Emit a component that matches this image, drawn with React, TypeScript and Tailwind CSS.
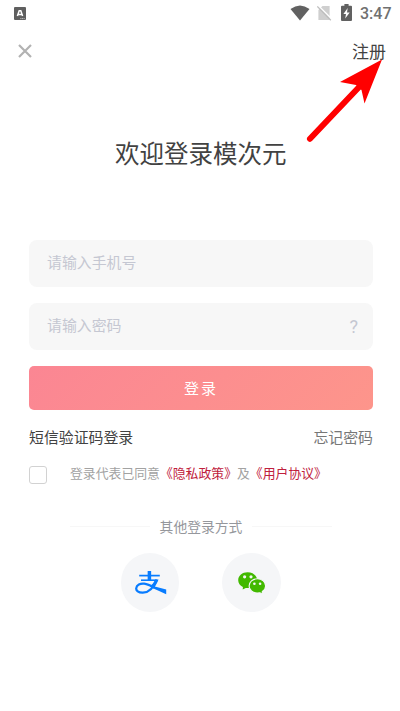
import React from "react";

function StatusBar() {
  return (
    <div className="flex h-[27px] items-center pl-[14px] pr-[9px]">
      <svg width="12" height="13" viewBox="0 0 12 13">
        <rect width="12" height="13" rx="1" fill="#5f5f5f" />
        <path d="M3.4 9 5.2 3.8h1.6L8.6 9M4.2 7.4h3.6" fill="none" stroke="#fff" strokeWidth="1.5" />
        <path d="M6.3 11.6h4.4" stroke="#d5d5d5" strokeWidth="0.8" strokeDasharray="1.2 0.5" />
      </svg>
      <svg className="-mt-[1px] ml-auto" width="20" height="16" viewBox="0 0 20 16">
        <path d="M0.5 4.1Q10 -3.2 19.5 4.1L10 15.6Z" fill="#616161" />
      </svg>
      <svg className="-mt-[1px] ml-[7px]" width="15" height="16" viewBox="0 0 15 16">
        <path d="M5.5 1H12.6V15H1.4V5Z" fill="#cfcfcf" />
        <path d="M1.2 0.6 15 14.3" stroke="#fff" strokeWidth="1.4" />
        <path d="M0.3 1.5 13.8 15.2" stroke="#bdbdbd" strokeWidth="1.3" />
      </svg>
      <svg className="-mt-[2px] ml-[9px]" width="11" height="17" viewBox="0 0 11 17">
        <path d="M1 1.8H3.4V0H7.6V1.8H10Q11 1.8 11 2.8V16Q11 17 10 17H1Q0 17 0 16V2.8Q0 1.8 1 1.8Z" fill="#616161" />
        <path d="M6.7 4 2.4 10H5L4.2 14.6 8.7 8.4H6Z" fill="#fff" />
      </svg>
      <span className="ml-[8px] w-[31px] whitespace-nowrap font-[Roboto] text-[16px] font-medium leading-[28px] text-[#707070]">
        3:47
      </span>
    </div>
  );
}

function Field({ placeholder, children }: { placeholder: string; children?: React.ReactNode }) {
  return (
    <div className="flex h-[47px] items-start justify-between rounded-[8px] bg-[#f7f7f7] pl-[18px] pr-[15px] text-[14.9px] leading-[44px] text-[#c5c7d2]">
      <span>{placeholder}</span>
      {children}
    </div>
  );
}

function AlipayLogo() {
  return (
    <svg className="ml-px" width="32" height="25" viewBox="0 0 32 25">
      <g fill="none" stroke="#087cff">
        <path d="M4.2 5.6H24.8" strokeWidth="1.7" />
        <path d="M14.4 1V10" strokeWidth="3.5" />
        <path d="M6 10.2H21.5" strokeWidth="1.6" />
        <path d="M21.8 9.6C19.5 15.5 15.2 22.6 7.8 22.7C3.2 22.8 1 20.5 1.2 18.3C1.5 14.8 5.3 13.3 9.2 13.7C12.6 14.1 15.8 15.7 19.5 17.7" strokeWidth="2.2" />
      </g>
      <path d="M20.1 9.5H23.5C22.4 12.5 21.1 15 19.8 16.6L31.2 19.4V24.2L14.7 16.7C17.2 14.7 19 12.3 20.1 9.5Z" fill="#087cff" />
    </svg>
  );
}

function WechatLogo() {
  return (
    <svg width="28" height="22" viewBox="0 0 28 22">
      <path d="M9.6 0.2C15 .2 19.2 3.7 19.2 8.2S15 16.1 9.6 16.1L7.8 15.9 4.7 17.5 4.9 14.9C2 13.5.2 11 .2 8.2.2 3.7 4.3.2 9.6.2Z" fill="#42b900" />
      <path d="M19.3 6.8C24 6.8 27.6 10 27.6 14 27.6 16.3 26.3 18.3 24.3 19.5L24.5 21.7 21.8 20.7 19.3 21C14.7 21 11.1 17.9 11.1 14S14.7 6.8 19.3 6.8Z" fill="#42b900" stroke="#f5f6f8" strokeWidth="1.1" />
      <g fill="#f5f6f8">
        <circle cx="6.6" cy="4.8" r="1.6" />
        <circle cx="13" cy="4.8" r="1.6" />
        <circle cx="16.4" cy="11.8" r="1.3" />
        <circle cx="22.1" cy="11.8" r="1.3" />
      </g>
    </svg>
  );
}

export default function App() {
  return (
    <main
      lang="zh-CN"
      className="relative h-[711px] w-[400px] overflow-hidden bg-white font-['Noto_Sans_CJK_SC',sans-serif] text-[#424242]"
    >
      <StatusBar />
      <header className="flex h-[48px] items-center justify-between pl-[18px] pr-[14px]">
        <svg width="14" height="14" viewBox="0 0 14 14">
          <path d="M1 1 13 13M13 1 1 13" stroke="#b2b2b2" strokeWidth="2.2" />
        </svg>
        <span className="text-[17px] leading-[48px]">注册</span>
      </header>
      <h1 className="ml-[115px] mt-[60px] text-[24.5px] font-normal leading-[36px]">欢迎登录模次元</h1>
      <section className="ml-[29px] mr-[27px] mt-[69px] flex flex-col gap-4">
        <Field placeholder="请输入手机号" />
        <Field placeholder="请输入密码">
          <span className="font-[Roboto] text-[18px] leading-[47px]">?</span>
        </Field>
        <button className="h-[44px] rounded-[5px] bg-linear-135 from-[#fb8693] to-[#fd958b] text-[15px] leading-[44px] tracking-[2px] text-white">
          登录
        </button>
      </section>
      <div className="ml-[29px] mr-[27px] mt-[16px] flex h-[22px] justify-between text-[14.9px] leading-[22px]">
        <span>短信验证码登录</span>
        <span className="text-[#777]">忘记密码</span>
      </div>
      <div className="ml-[29px] mt-[17px] flex h-[20px] items-center">
        <span className="size-[18px] rounded-[3px] border border-[#d2d2d2]" />
        <p className="-mt-[4px] ml-[23px] whitespace-nowrap text-[12.85px] leading-[20px] text-[#a2a2a2]">
          登录代表已同意<span className="text-[#c0203c]">《隐私政策》</span>及<span className="text-[#c0203c]">《用户协议》</span>
        </p>
      </div>
      <div className="ml-[70px] mr-[68px] mt-[31px] flex h-[20px] items-center justify-between">
        <span className="h-px w-[80px] bg-[#f7f7f7]" />
        <span className="text-[13.8px] leading-[20px] text-[#95979c]">其他登录方式</span>
        <span className="h-px w-[80px] bg-[#f7f7f7]" />
      </div>
      <div className="ml-[121px] mt-[17px] flex gap-[43px]">
        <div className="flex h-[59px] w-[58px] items-center justify-center rounded-full bg-[#f5f6f8]">
          <AlipayLogo />
        </div>
        <div className="flex size-[59px] items-center justify-center rounded-full bg-[#f5f6f8]">
          <WechatLogo />
        </div>
      </div>
      <svg className="pointer-events-none absolute left-[300px] top-[50px]" width="100" height="100" viewBox="0 0 100 100">
        <path d="M10 88.8 61 35" stroke="#f00" strokeWidth="6" strokeLinecap="round" />
        <path d="M82 9.5 40 32 56 35 61.5 40 64.5 53.5Z" fill="#f00" />
      </svg>
    </main>
  );
}
